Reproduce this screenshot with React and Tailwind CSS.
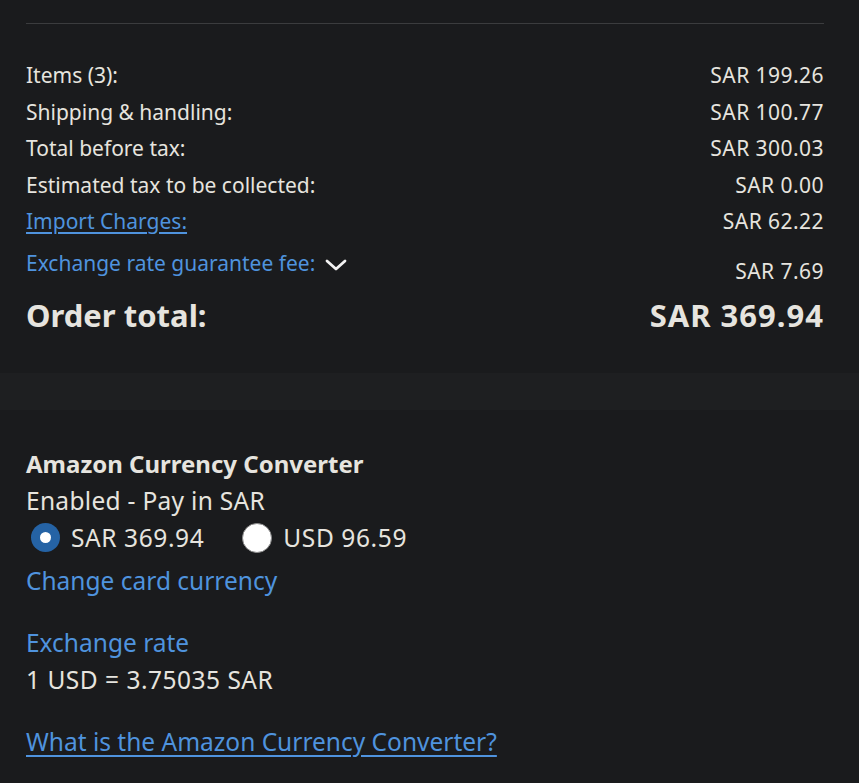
import React from "react";

const Row = ({ label, value, link }) => (
  <div className="flex justify-between items-center h-[36.5px] leading-[28px]">
    {link ? (
      <a href="#" className="text-[#4f93de] underline underline-offset-[3px]">{label}</a>
    ) : (
      <span>{label}</span>
    )}
    <span className="tracking-[0.45px]">{value}</span>
  </div>
);

export default function App() {
  return (
    <div className="bg-[#1a1b1d] text-[#e6e4df] min-h-[783px] overflow-hidden" style={{ fontFamily: '"Noto Sans", "Open Sans", sans-serif' }}>
      <section className="pl-[26px] pr-[35px] pt-[23px] pb-[35px]">
        <div className="h-px bg-[#3b3c3e]" />
        <div className="pt-[33px] text-[21px]">
          <Row label="Items (3):" value="SAR 199.26" />
          <Row label="Shipping & handling:" value="SAR 100.77" />
          <Row label="Total before tax:" value="SAR 300.03" />
          <Row label="Estimated tax to be collected:" value="SAR 0.00" />
          <Row label="Import Charges:" value="SAR 62.22" link />
          <div className="flex justify-between items-start pt-[9px] leading-[28px]">
            <span className="flex items-center gap-[9px] text-[#4f93de]">
              Exchange rate guarantee fee:
              <svg width="24" height="16" viewBox="0 0 24 16" className="mt-[4px]">
                <path d="M3 4 L12 12 L21 4" fill="none" stroke="#f2f2f2" strokeWidth="2.8" strokeLinecap="round" strokeLinejoin="round" />
              </svg>
            </span>
            <span className="pt-[8px] tracking-[0.45px]">SAR 7.69</span>
          </div>
          <div className="flex justify-between items-center mt-[8px] text-[31px] leading-[45px] font-bold">
            <span>Order total:</span>
            <span className="tracking-[1px]">SAR 369.94</span>
          </div>
        </div>
      </section>
      <div className="h-[37px] bg-[#1e1f21]" />
      <section className="pl-[26px] pr-[35px] pt-[37px] text-[24.5px] leading-[33px]">
        <div className="font-bold text-[24px]">Amazon Currency Converter</div>
        <div className="mt-[4px] tracking-[0.3px]">Enabled - Pay in SAR</div>
        <div className="flex items-center mt-[3px] h-[36px]">
          <span className="ml-[5px] w-[29px] h-[29px] rounded-full bg-[#2563a5] flex items-center justify-center">
            <span className="w-[11px] h-[11px] rounded-full bg-white" />
          </span>
          <span className="ml-[11px] tracking-[0.6px]">SAR 369.94</span>
          <span className="ml-[38px] w-[30px] h-[30px] rounded-full bg-white border border-[#8a8a8a]" />
          <span className="ml-[11px] tracking-[0.6px]">USD 96.59</span>
        </div>
        <div className="mt-[8px] text-[#4f93de]">Change card currency</div>
        <div className="mt-[29px] text-[#4f93de]">Exchange rate</div>
        <div className="mt-[4px] tracking-[0.5px]">1 USD = 3.75035 SAR</div>
        <div className="mt-[29px]">
          <a href="#" className="text-[#4f93de] underline underline-offset-[4px]">What is the Amazon Currency Converter?</a>
        </div>
      </section>
    </div>
  );
}
